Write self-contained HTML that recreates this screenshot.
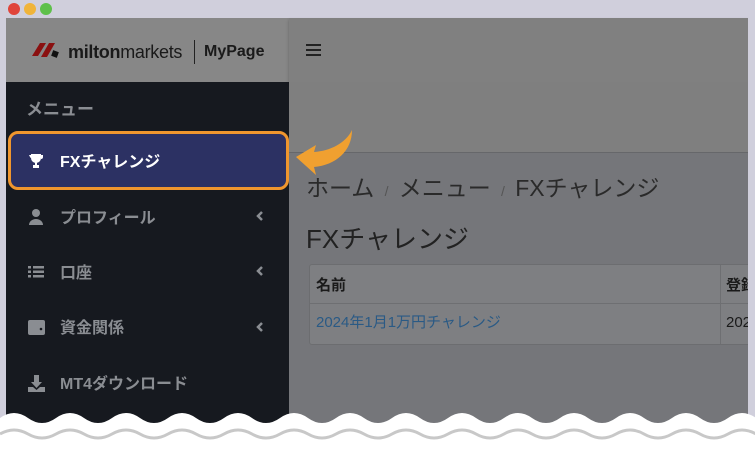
<!DOCTYPE html><html><head><meta charset="utf-8"><style>
*{margin:0;padding:0;box-sizing:border-box}
body{width:755px;height:450px;overflow:hidden;background:#d0cfdc;position:relative;font-family:"Liberation Sans","Noto Sans CJK JP",sans-serif}
div{line-height:1}
.dot{position:absolute;top:3px;width:12px;height:12px;border-radius:50%}
#side{position:absolute;left:6px;top:18px;width:283px;height:410px;background:#16191f}
#sh{position:absolute;left:6px;top:18px;width:283px;height:64px;background:#878787}
#top{position:absolute;left:289px;top:18px;width:459px;height:64px;background:#808080;box-shadow:0 2px 3px rgba(0,0,0,.25)}
#mid{position:absolute;left:289px;top:82px;width:459px;height:70px;background:#7f7f7f}
#main{position:absolute;left:289px;top:152px;width:459px;height:280px;background:#75767a;border-top:1px solid #66676a}
.it{position:absolute;left:26px;color:#8a8d92;font-weight:bold;font-size:16px}
.chev{position:absolute;left:256px}
</style></head><body>
<div class="dot" style="left:8px;background:#e0443a"></div>
<div class="dot" style="left:24px;background:#f0b43a"></div>
<div class="dot" style="left:40px;background:#5ec04a"></div>
<div id="side"></div><div id="sh"></div>
<svg style="position:absolute;left:32px;top:40px" width="30" height="20"><polygon points="0,16 8,3 14,3 6,16" fill="#8a1010"/><polygon points="9,17 17,3 23,3 15,17" fill="#8a1010"/><rect x="20" y="11" width="6" height="6" fill="#111" transform="rotate(20 23 14)"/></svg>
<div style="position:absolute;left:68px;top:43px;font-size:18px;color:#1a1a1a;letter-spacing:-.3px"><b>milton</b>markets</div>
<div style="position:absolute;left:194px;top:40px;width:1px;height:24px;background:#222"></div>
<div style="position:absolute;left:204px;top:44px;font-size:16px;font-weight:bold;color:#1a1a1a">MyPage</div>
<div id="top"></div>
<div style="position:absolute;left:306px;top:44px;width:15px;height:12px;border-top:2px solid #222;border-bottom:2px solid #222"><div style="margin-top:3px;height:2px;background:#222"></div></div>
<div id="mid"></div><div id="main"></div>
<div class="it" style="top:101px;font-size:17px">メニュー</div>
<div style="position:absolute;left:8px;top:131px;width:281px;height:59px;background:#2c3163;border:3px solid #f0962e;border-radius:10px"></div>
<svg style="position:absolute;left:28px;top:153px" width="16" height="16" viewBox="0 0 16 16"><path d="M3 1h10v4a5 5 0 0 1-10 0z M1 2h2v3a2 2 0 0 1-1-1z M13 2h2v2a2 2 0 0 1-2 2z M7 9h2v3h2v3H5v-3h2z" fill="#fff"/></svg>
<div class="it" style="left:60px;top:155px;color:#fff">FXチャレンジ</div>
<svg style="position:absolute;left:28px;top:208px" width="16" height="18"><circle cx="8" cy="5" r="4" fill="#8a8d92"/><path d="M1 17a7 6 0 0 1 14 0z" fill="#8a8d92"/></svg>
<div class="it" style="left:60px;top:211px">プロフィール</div><svg class="chev" style="top:211px" width="8" height="10"><polyline points="6,1 2,5 6,9" fill="none" stroke="#8a8d92" stroke-width="2.5"/></svg>
<svg style="position:absolute;left:28px;top:266px" width="16" height="12"><g fill="#8a8d92"><rect x="0" y="0" width="3" height="2.5"/><rect x="5" y="0" width="11" height="2.5"/><rect x="0" y="4.5" width="3" height="2.5"/><rect x="5" y="4.5" width="11" height="2.5"/><rect x="0" y="9" width="3" height="2.5"/><rect x="5" y="9" width="11" height="2.5"/></g></svg>
<div class="it" style="left:60px;top:266px">口座</div><svg class="chev" style="top:266px" width="8" height="10"><polyline points="6,1 2,5 6,9" fill="none" stroke="#8a8d92" stroke-width="2.5"/></svg>
<svg style="position:absolute;left:28px;top:320px" width="17" height="15"><rect x="0" y="0" width="17" height="15" rx="2" fill="#8a8d92"/><circle cx="13" cy="9" r="1.3" fill="#16191f"/></svg>
<div class="it" style="left:60px;top:321px">資金関係</div><svg class="chev" style="top:322px" width="8" height="10"><polyline points="6,1 2,5 6,9" fill="none" stroke="#8a8d92" stroke-width="2.5"/></svg>
<svg style="position:absolute;left:28px;top:375px" width="17" height="17"><path d="M6 0h5v7h3l-5.5 6L3 7h3z M0 12h5l3.5 3 3.5-3h5v5H0z" fill="#8a8d92"/></svg>
<div class="it" style="left:60px;top:377px">MT4ダウンロード</div>
<div style="position:absolute;left:306px;top:177px;font-size:23px;color:#2a2a2a;white-space:nowrap">ホーム <span style="color:#555;font-size:14px">&nbsp;/&nbsp;</span> メニュー <span style="color:#555;font-size:14px">&nbsp;/&nbsp;</span> FXチャレンジ</div>
<div style="position:absolute;left:306px;top:226px;font-size:26px;color:#222">FXチャレンジ</div>
<div style="position:absolute;left:309px;top:264px;width:450px;height:81px;background:#7e7f82;border:1px solid #6c6d70;border-radius:3px"></div>
<div style="position:absolute;left:310px;top:303px;width:445px;height:1px;background:#6e6f72"></div>
<div style="position:absolute;left:720px;top:265px;width:1px;height:79px;background:#6e6f72"></div>
<div style="position:absolute;left:316px;top:278px;font-size:15px;font-weight:bold;color:#1a1a1a">名前</div>
<div style="position:absolute;left:726px;top:278px;font-size:15px;font-weight:bold;color:#1a1a1a;white-space:nowrap">登録</div>
<div style="position:absolute;left:316px;top:315px;font-size:15px;color:#2a5a85">2024年1月1万円チャレンジ</div>
<div style="position:absolute;left:726px;top:315px;font-size:15px;color:#1a1a1a">2024</div>
<div style="position:absolute;left:748px;top:18px;width:7px;height:400px;background:#d0cfdc"></div>
<svg style="position:absolute;left:290px;top:125px" width="70" height="60"><path d="M6 32 L26 20 L24 27 C40 26 56 18 62 5 C62 26 46 40 24 42 L26 50 Z" fill="#f0a030"/></svg>
<svg style="position:absolute;left:0;top:400px" width="755" height="50"><path d="M0 18 q14 -10 28 0 t28 0 t28 0 t28 0 t28 0 t28 0 t28 0 t28 0 t28 0 t28 0 t28 0 t28 0 t28 0 t28 0 t28 0 t28 0 t28 0 t28 0 t28 0 t28 0 t28 0 t28 0 t28 0 t28 0 t28 0 t28 0 t28 0 t28 0 V50 H0 Z" fill="#999" transform="translate(0,2)"/><path d="M0 18 q14 -10 28 0 t28 0 t28 0 t28 0 t28 0 t28 0 t28 0 t28 0 t28 0 t28 0 t28 0 t28 0 t28 0 t28 0 t28 0 t28 0 t28 0 t28 0 t28 0 t28 0 t28 0 t28 0 t28 0 t28 0 t28 0 t28 0 t28 0 t28 0 V50 H0 Z" fill="#fff"/><path d="M0 34 q14 -8 28 0 t28 0 t28 0 t28 0 t28 0 t28 0 t28 0 t28 0 t28 0 t28 0 t28 0 t28 0 t28 0 t28 0 t28 0 t28 0 t28 0 t28 0 t28 0 t28 0 t28 0 t28 0 t28 0 t28 0 t28 0 t28 0 t28 0 t28 0" fill="none" stroke="#c8c8c8" stroke-width="3"/></svg>
</body></html>
